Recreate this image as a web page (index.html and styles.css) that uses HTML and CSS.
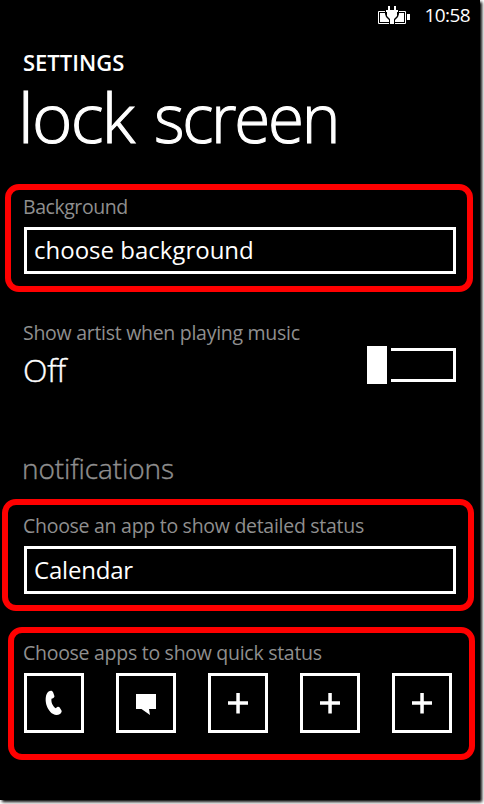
FILE: index.html
```
<!DOCTYPE html>
<html lang="en">
<head>
    <meta charset="UTF-8">
    <meta name="viewport" content="width=device-width, initial-scale=1.0">
    <title>lock screen</title>
    <link rel="stylesheet" href="styles.css">
</head>
<body>
    <div class="phone">
        <header class="status-bar">
            <svg class="battery" width="34" height="20" viewBox="0 0 34 20">
                <path d="M1.500 6.500h27v12h-27z" fill="none" stroke="#fff"/>
                <path d="M3 8h24v9H3zM30 9h3v6h-3z" fill="#fff"/>
                <path d="M8 4h14v5l-1 3-3 3v4h-6v-4l-3-3-1-3z" fill="#000"/>
                <path d="M11 1h2v4h4V1h2v4h2v2h-1v4l-3 3v5h-4v-5l-3-3V7H9V5h2z" fill="#fff"/>
            </svg>
            <span class="time">10:58</span>
        </header>
        <h2 class="app-title">SETTINGS</h2>
        <h1 class="page-title">lock <span class="narrow">screen</span></h1>

        <section class="group background">
            <label class="label">Background</label>
            <div class="picker">choose background</div>
        </section>

        <section class="music">
            <div>
                <label class="label">Show artist when playing music</label>
                <p class="value">Off</p>
            </div>
            <div class="toggle">
                <div class="thumb"></div>
                <div class="track"></div>
            </div>
        </section>

        <h3 class="sub-title">notifications</h3>

        <section class="group detailed">
            <label class="label">Choose an app to show detailed status</label>
            <div class="picker">Calendar</div>
        </section>

        <section class="group quick">
            <label class="label">Choose apps to show quick status</label>
            <div class="tiles">
                <div class="tile">
                    <svg width="54" height="54" viewBox="0 0 54 54"><path d="M22 15.300c2-1 3.500-.5 4.200 1.200l1.200 3.500c.2 1.300-.4 2-2.900 2.800-.6 3.400 1.200 7.200 4 9.400 1.700-1.600 3-2 4-1l2 3.200c.6 1.300-.3 2.500-1.500 3.500-2 1.400-4.700 1.400-6.800.2-4-2.200-6.700-7.300-7.300-11.600-.7-4.900.3-9.700 3.100-11.200z"/></svg>
                </div>
                <div class="tile">
                    <svg width="54" height="54" viewBox="0 0 54 54"><path d="M17 18h20v15h-7l1 6-8.500-6H17z"/></svg>
                </div>
                <div class="tile">
                    <svg width="54" height="54" viewBox="0 0 54 54"><path d="M17 25.300h8.300V17h3.500v8.300H37v3.500h-8.200V37.500h-3.500v-8.700H17z"/></svg>
                </div>
                <div class="tile">
                    <svg width="54" height="54" viewBox="0 0 54 54"><path d="M17 25.300h8.300V17h3.500v8.300H37v3.500h-8.200V37.500h-3.500v-8.700H17z"/></svg>
                </div>
                <div class="tile">
                    <svg width="54" height="54" viewBox="0 0 54 54"><path d="M17 25.300h8.300V17h3.500v8.300H37v3.500h-8.200V37.500h-3.500v-8.700H17z"/></svg>
                </div>
            </div>
        </section>
    </div>
</body>
</html>
```
FILE: styles.css
```
*{
    margin: 0;
    padding: 0;
    box-sizing: border-box;
}
body{
    width: 484px;
    height: 804px;
    overflow: hidden;
    background: #fff;
    font-family: 'Open Sans', 'Noto Sans', sans-serif;
}
.phone{
    width: 480px;
    height: 800px;
    background: #000;
    color: #fff;
    box-shadow: 2px 2px 3px #000;
    display: flex;
    flex-direction: column;
}
.status-bar{
    height: 32px;
    padding-right: 10px;
    display: flex;
    justify-content: flex-end;
}
.battery{
    margin: 5px 14px 0 0;
}
.time{
    font-size: 19px;
    line-height: 31px;
    letter-spacing: -0.6px;
}
.app-title{
    height: 46px;
    padding: 15px 0 0 23px;
    font-size: 22px;
    font-weight: 600;
    line-height: 30px;
}
.page-title{
    height: 106px;
    padding-left: 18px;
    font-size: 69px;
    font-weight: 300;
    line-height: 77px;
    letter-spacing: -1.7px;
    word-spacing: 4px;
    white-space: nowrap;
    -webkit-text-stroke: 1.1px #fff;
}
.narrow{
    display: inline-block;
    letter-spacing: -2.4px;
    transform: scaleX(0.95);
    transform-origin: left;
}
.group{
    border: 6px solid #f00;
    border-radius: 14px;
}
.background{
    height: 108px;
    margin: 0 7px 0 5px;
    padding: 4px 11px 0 13px;
}
.label{
    display: block;
    height: 26px;
    margin-left: -1px;
    font-size: 19.500px;
    line-height: 26px;
    letter-spacing: -0.28px;
    color: #8f8f8f;
    white-space: nowrap;
}
.background .label{
    letter-spacing: -0.45px;
}
.picker{
    height: 47px;
    margin-top: 7px;
    padding-left: 7px;
    border: 3px solid #fff;
    font-size: 24px;
    line-height: 40px;
}
.music{
    height: 161px;
    padding: 28px 24px 0 24px;
    display: flex;
    justify-content: space-between;
}
.value{
    margin-left: -1px;
    font-size: 32px;
    font-weight: 300;
    line-height: 48px;
    letter-spacing: -0.3px;
    -webkit-text-stroke: 0.4px #fff;
}
.toggle{
    height: 38px;
    margin-top: 26px;
    display: flex;
    align-items: center;
    gap: 4px;
}
.thumb{
    width: 20px;
    height: 38px;
    background: #fff;
}
.track{
    width: 65px;
    height: 34px;
    border: 3px solid #fff;
    border-left: none;
}
.sub-title{
    height: 46px;
    padding-left: 22px;
    font-size: 28px;
    font-weight: 300;
    line-height: 30px;
    letter-spacing: -0.1px;
    color: #8f8f8f;
    -webkit-text-stroke: 0.4px #8f8f8f;
}
.detailed{
    height: 112px;
    margin: 0 6px 0 2px;
    padding: 8px 12px 0 16px;
}
.detailed .picker{
    height: 48px;
    line-height: 42px;
    letter-spacing: -0.2px;
}
.quick{
    height: 133px;
    margin: 16px 5px 0 8px;
    padding: 7px 17px 0 10px;
}
.tiles{
    margin-top: 7px;
    display: flex;
    gap: 32px;
}
.tile{
    width: 60px;
    height: 60px;
    border: 3px solid #fff;
}
.tile svg{
    display: block;
    fill: #fff;
}
```
